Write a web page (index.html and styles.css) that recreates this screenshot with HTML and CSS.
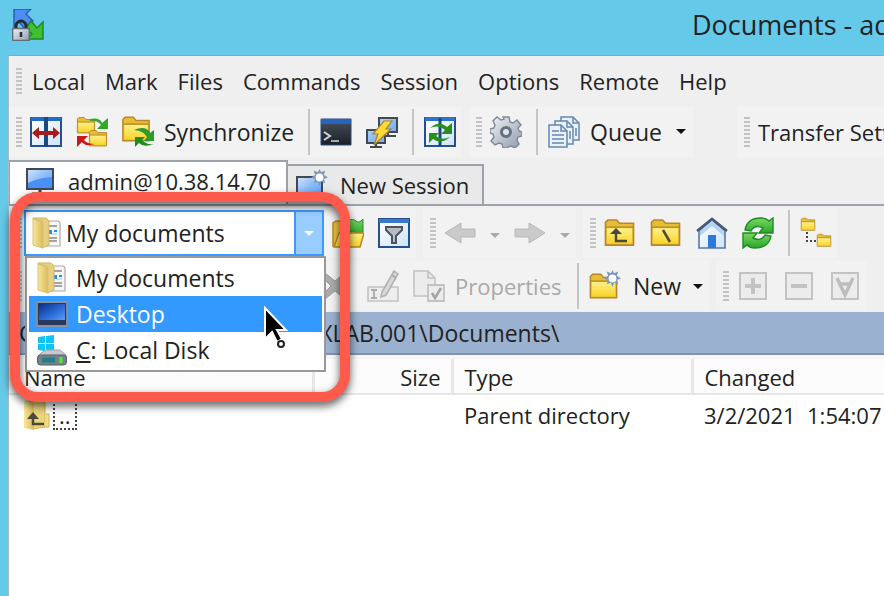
FILE: index.html
```html
<!DOCTYPE html>
<html lang="en">
<head>
<meta charset="utf-8">
<title>Documents - admin@10.38.14.70</title>
<link rel="stylesheet" href="styles.css">
</head>
<body>
<svg class="sprite" aria-hidden="true">
  <defs>
    <linearGradient id="gold" x1="0" y1="0" x2="0" y2="1"><stop offset="0" stop-color="#fff08a"/><stop offset="1" stop-color="#f8d428"/></linearGradient>
    <linearGradient id="screen" x1="0" y1="0" x2="1" y2="1"><stop offset="0" stop-color="#d2e3fb"/><stop offset=".5" stop-color="#8dbdf8"/><stop offset="1" stop-color="#5b9cf4"/></linearGradient>
    <linearGradient id="night" x1="0" y1="0" x2="1" y2="1"><stop offset="0" stop-color="#0a2f86"/><stop offset=".6" stop-color="#2f6fdc"/><stop offset="1" stop-color="#5c9cf5"/></linearGradient>
    <linearGradient id="pane" x1="0" y1="0" x2="1" y2="1"><stop offset="0" stop-color="#fff"/><stop offset="1" stop-color="#cfe3f8"/></linearGradient>
    <linearGradient id="dark" x1="0" y1="0" x2="0" y2="1"><stop offset="0" stop-color="#4a525e"/><stop offset="1" stop-color="#1b1f26"/></linearGradient>
    <linearGradient id="steel" x1="0" y1="0" x2="1" y2="1"><stop offset="0" stop-color="#f0f2f6"/><stop offset="1" stop-color="#8f9bab"/></linearGradient>
    <linearGradient id="leaf" x1="0" y1="0" x2="0" y2="1"><stop offset="0" stop-color="#7bda5e"/><stop offset="1" stop-color="#27a52c"/></linearGradient>
    <linearGradient id="tan" x1="0" y1="0" x2="1" y2="0"><stop offset="0" stop-color="#f7e6a0"/><stop offset="1" stop-color="#d9bc58"/></linearGradient>
    <symbol id="folder" viewBox="0 0 32 32"><path d="M1.500 28.500V5L4 2.500h9L16 6h14.500v22.500z" fill="#e6bd35" stroke="#b8872a" stroke-width="1.600"/><path d="M3 11h26v16H3z" fill="url(#gold)"/><path d="M2 10h28" stroke="#b8872a" stroke-width="1.400"/></symbol>
    <symbol id="burst" viewBox="0 0 16 16"><path d="M8 0l1.500 3 4-1.500-1.500 4L16 8l-4 1.500 1.500 4-4-1.500L8 16l-1.500-4-4 1.500 1.500-4L0 8l4-2.500-1.500-4 4 1.500z" fill="#7896b8"/><circle cx="8" cy="8" r="3.700" fill="#fff"/></symbol>
    <symbol id="mydocs" viewBox="0 0 32 32"><path d="M14 4h13.500l1.500 2v23H14z" fill="#f6f6f4" stroke="#aaa" stroke-width="1.200"/><path d="M18 9h8M18 21h8M18 24h8" stroke="#888" stroke-width="1.300"/><path d="M20 17h6" stroke="#b5d4f0" stroke-width="1.300"/><path d="M17 13h4v4h-4zM23 13h3v2h-3z" fill="#278ce8"/><path d="M2 1h13l3 3v24l-7 3V4L2 2z" fill="#e6cf82" stroke="#d0b65f"/><path d="M2 2l10 3v26L2 28z" fill="url(#tan)" stroke="#d9c270"/></symbol>
  </defs>
</svg>

<header class="titlebar">
  <svg class="app-icon" viewBox="0 0 32 32" aria-hidden="true"><path d="M2 0h17l-5 5 7 7-8 8-6-7-5 5z" fill="#4c8df0" stroke="#2a5cab" stroke-width="1.400"/><path d="M19 12l6 7 6-6v17H15l5-5-6-6z" fill="#3fc034" stroke="#1f861f" stroke-width="1.400"/><path d="M4 20v-3a5 5 0 0 1 10 0v3" fill="none" stroke="#252a31" stroke-width="3"/><path d="M.700 19.500h16.600v12H.700z" fill="url(#steel)" stroke="#626c7b" stroke-width="1.400"/><path d="M9 23v5" stroke="#292f39" stroke-width="2.500"/></svg>
  <h1>Documents - admin@10.38.14.70 - WinSCP</h1>
</header>

<div class="window">
  <nav class="menubar" aria-label="Main menu">
    <span class="grip"></span>
    <button>Local</button><button>Mark</button><button>Files</button><button>Commands</button><button>Session</button><button>Options</button><button>Remote</button><button>Help</button>
  </nav>

  <div class="toolbar-row main-row">
    <div class="band">
      <span class="grip"></span>
      <button class="tool" aria-label="Compare directories"><svg viewBox="0 0 32 32"><path d="M1 2h30v28H1z" fill="url(#pane)" stroke="#24508f" stroke-width="2"/><path d="M1 3h30" stroke="#236ac9" stroke-width="4"/><path d="M16 1v30" stroke="#174a86" stroke-width="4"/><path d="M2 17l7-6v4h14v-4l7 6-7 6v-4H9v4z" fill="#a91a18"/></svg></button>
      <button class="tool" aria-label="Synchronize both"><svg viewBox="0 0 32 32"><use href="#folder" width="20" height="19"/><use href="#folder" x="12" y="13" width="20" height="19"/><path d="M14 3q10-2 12 4l6-5v11H21l4-4q-4-5-11-4z" fill="#2faa26"/><path d="M19 28Q9 31 6 26l-5 5V20h11l-4 4q3 4 11 4z" fill="#ca1919"/></svg></button>
      <button class="tool sync"><svg viewBox="0 0 32 32"><use href="#folder" x="-1" y="-1" width="30" height="29"/><path d="M12 14q12-5 16 3l4-3v11H22l3-4q-3-6-13-7z" fill="#2f9a2a"/><path d="M32 28q-10 4-15-1l-4 4V21h10l-3 3q4 5 12 4z" fill="#238b1d"/></svg>Synchronize</button>
      <span class="sep"></span>
      <button class="tool" aria-label="Open terminal"><svg viewBox="0 0 32 32"><path d="M1 3h30v26H1z" fill="url(#dark)" stroke="#2b4878"/><path d="M1 3h30v5H1z" fill="#2465bf"/><path d="M4 16l6 4-6 4" fill="none" stroke="#ced4db" stroke-width="2"/><path d="M11 25h8" stroke="#ced4db" stroke-width="1.500"/></svg></button>
      <button class="tool" aria-label="Open in PuTTY"><svg viewBox="0 0 32 32"><path d="M13 2h18v14H13zM1 14h18v13H1z" fill="url(#screen)" stroke="#414954" stroke-width="2"/><path d="M22 17v3M18 20h12M10 28v3M4 31h12" stroke="#414954" stroke-width="2.200"/><path d="M18 5h8l-6 8h5L8 29l4-11H7z" fill="#ffd936" stroke="#a98422" stroke-width="1.200"/></svg></button>
      <span class="sep"></span>
      <button class="tool" aria-label="Keep up to date"><svg viewBox="0 0 32 32"><path d="M1 2h30v28H1z" fill="url(#pane)" stroke="#24508f" stroke-width="2"/><path d="M1 3h30" stroke="#2c74ca" stroke-width="4"/><path d="M16 2v28" stroke="#174a86" stroke-width="3"/><path d="M6 12q9-8 17-1l5-4v11H17l4-4q-7-6-15-2z" fill="#27901d"/><path d="M26 21q-9 8-17 2l-4 4V17h10l-3 3q6 5 14 1z" fill="#27901d"/></svg></button>
    </div>
    <div class="band">
      <span class="grip"></span>
      <button class="tool" aria-label="Preferences"><svg viewBox="0 0 32 32"><path d="M13 1h6l1 5 3 1 4-3 4 5-3 3 1 3 3 1v4l-4 1-1 3 2 4-4 4-4-2-3 1-1 1h-4l-1-4-3-1-4 2-4-4 3-4-1-3-3-1v-4l4-1 1-3-2-4 4-4 4 3 3-1z" fill="url(#steel)" stroke="#7e8996" stroke-width="1.400"/><circle cx="16" cy="16" r="4.500" fill="#dfe3e8" stroke="#66717f" stroke-width="3"/></svg></button>
      <span class="sep"></span>
      <button class="tool queue"><svg viewBox="0 0 32 32"><g fill="#e9f1f9" stroke="#6488b0" stroke-width="1.500"><path d="M13 1h12l6 6v17H13z"/><path d="M7 5h12l6 6v17H7z"/><path d="M1 9h12l6 6v16H1z"/><path d="M13 9v6h6M19 5v6h6M25 1v6h6M4 15h7M4 19h12M4 23h12M4 27h12M22 15v8M28 12v8" fill="none"/></g></svg>Queue<i class="caret"></i></button>
    </div>
    <div class="band transfer"><span class="grip"></span><span>Transfer Settings Default</span></div>
  </div>

  <div class="tabs" role="tablist">
    <button class="tab active" role="tab" aria-selected="true"><svg viewBox="0 0 32 32"><path d="M3 4h26v20H3z" fill="url(#screen)" stroke="#414954" stroke-width="2"/><path d="M4 18q10-5 24-6v11H4z" fill="#4b91f5"/><path d="M16 25v4M8 29h16" stroke="#414954" stroke-width="3"/></svg>admin@10.38.14.70</button>
    <button class="tab" role="tab" aria-selected="false"><svg viewBox="0 0 32 32"><path d="M1 8h25v19H1z" fill="url(#screen)" stroke="#414954" stroke-width="2"/><path d="M6 30h15" stroke="#414954" stroke-width="3"/><use href="#burst" x="15" y="0" width="17" height="17"/></svg>New Session</button>
  </div>

  <main class="panel">
    <div class="toolbar-row local-row">
      <div class="band">
        <span class="grip"></span>
        <div class="combo">
          <svg viewBox="0 0 32 32" aria-hidden="true"><use href="#mydocs"/></svg>
          <select aria-label="Location"><option>My documents</option><option>Desktop</option><option>C: Local Disk</option></select>
          <span class="combo-arrow"><i class="caret"></i></span>
        </div>
        <button class="tool" aria-label="Open directory"><svg viewBox="0 0 32 32"><path d="M1 29V6l3-2h8l3 3h13v22z" fill="#e9c03c" stroke="#b8872a" stroke-width="1.500"/><path d="M15 18V4q6-3 9 0t7-2v13q-4 3-8 0t-8 3z" fill="url(#leaf)" stroke="#27892a"/><path d="M2 30l5-14h25l-4 14z" fill="url(#gold)" stroke="#b8872a" stroke-width="1.500"/></svg></button>
        <button class="tool" aria-label="Filter"><svg viewBox="0 0 32 32"><path d="M1 2h30v28H1z" fill="url(#pane)" stroke="#24508f" stroke-width="2"/><path d="M1 4h30" stroke="#3878cf" stroke-width="4"/><path d="M8 10h16v3l-6 6v7h-4v-7l-6-6z" fill="#b9bdc2" stroke="#4d545d" stroke-width="2"/></svg></button>
      </div>
      <div class="band">
        <span class="grip"></span>
        <button class="tool" aria-label="Back" disabled><svg viewBox="0 0 32 32"><path d="M1 16L17 6v6h14v8H17v6z" fill="#cacaca" stroke="#b8b8b8"/></svg></button>
        <button class="drop" aria-label="Back history" disabled><i class="caret"></i></button>
        <button class="tool" aria-label="Forward" disabled><svg viewBox="0 0 32 32"><path d="M31 16L15 6v6H1v8h14v6z" fill="#cacaca" stroke="#b8b8b8"/></svg></button>
        <button class="drop" aria-label="Forward history" disabled><i class="caret"></i></button>
      </div>
      <div class="band">
        <span class="grip"></span>
        <button class="tool" aria-label="Parent directory"><svg viewBox="0 0 32 32"><use href="#folder" width="31" height="32"/><path d="M12 15v9h11" fill="none" stroke="#4b4a39" stroke-width="2.500"/><path d="M6 17l6-6 6 6z" fill="#4b4a39"/></svg></button>
        <button class="tool" aria-label="Root directory"><svg viewBox="0 0 32 32"><use href="#folder" width="31" height="32"/><path d="M13 13l7 12" stroke="#4b4a39" stroke-width="2.500"/></svg></button>
        <button class="tool" aria-label="Home directory"><svg viewBox="0 0 32 32"><path d="M3 14L16 3l13 11v17H3z" fill="url(#pane)" stroke="#5579a1" stroke-width="1.600"/><path d="M4 14L16 4l12 10v5L16 9 4 19z" fill="#b5d3f4"/><path d="M12 18h8v13h-8z" fill="#2d78dc"/><path d="M1 14L16 2l15 12" fill="none" stroke="#465a74" stroke-width="2.600"/></svg></button>
        <button class="tool" aria-label="Refresh"><svg viewBox="0 0 32 32"><path d="M3 13Q5 1 19 1q5 0 8 3l4-3v15H17l4-5q-8-4-12 3z" fill="url(#leaf)" stroke="#21882a" stroke-width="1.400"/><path d="M29 19q-2 12-16 12-5 0-8-3l-4 3V16h14l-4 5q8 4 12-3z" fill="url(#leaf)" stroke="#21882a" stroke-width="1.400"/></svg></button>
        <span class="sep"></span>
        <button class="tool" aria-label="Directory tree"><svg viewBox="0 0 32 32"><use href="#folder" width="16" height="15"/><use href="#folder" x="16" y="16" width="16" height="15"/><path d="M7 15v9h9" fill="none" stroke="#444" stroke-width="2" stroke-dasharray="2 2"/></svg></button>
      </div>
    </div>

    <div class="toolbar-row file-row">
      <div class="band file-band">
        <span class="grip"></span>
        <span class="spring"></span>
        <button class="tool" aria-label="Delete" disabled><svg viewBox="0 0 32 32"><path d="M4 3l10 8L24 3l4 5-8 8 8 8-4 5-10-8-10 8V22l6-6-6-6z" fill="#aaa" stroke="#999"/></svg></button>
        <button class="tool" aria-label="Rename" disabled><svg viewBox="0 0 32 32"><path d="M1 17h30v14H1z" fill="#ededed" stroke="#c2c2c2" stroke-width="1.600"/><path d="M4 20h6M7 20v8M4 28h6" stroke="#aaa" stroke-width="1.800"/><path d="M15 22L27 1l4 3-12 21-5 2z" fill="#d9d9d9" stroke="#b2b2b2" stroke-width="1.600"/><path d="M25 5l4 3" stroke="#aaa" stroke-width="2"/></svg></button>
        <button class="tool properties" disabled><svg viewBox="0 0 32 32"><path d="M1 1h14l7 7v18H1z" fill="#ececec" stroke="#c2c2c2" stroke-width="1.600"/><path d="M15 1v7h7" fill="none" stroke="#c2c2c2" stroke-width="1.600"/><path d="M15 15h16v16H15z" fill="#ececec" stroke="#c2c2c2" stroke-width="1.800"/><path d="M19 23l3 5 6-10" fill="none" stroke="#a5a5a5" stroke-width="2.600"/></svg>Properties</button>
        <span class="sep"></span>
        <button class="tool new"><svg viewBox="0 0 32 32"><use href="#folder" y="2" width="29" height="29"/><use href="#burst" x="15" y="0" width="17" height="17"/></svg>New<i class="caret"></i></button>
      </div>
      <div class="band">
        <span class="grip"></span>
        <button class="tool" aria-label="Select files" disabled><svg viewBox="0 0 32 32"><path d="M3 3h26v26H3z" fill="#ececec" stroke="#c3c3c3" stroke-width="2"/><path d="M16 8v16M8 16h16" stroke="#c3c3c3" stroke-width="4"/></svg></button>
        <button class="tool" aria-label="Unselect files" disabled><svg viewBox="0 0 32 32"><path d="M3 3h26v26H3z" fill="#ececec" stroke="#c3c3c3" stroke-width="2"/><path d="M8 16h16" stroke="#c3c3c3" stroke-width="4"/></svg></button>
        <button class="tool" aria-label="Select all" disabled><svg viewBox="0 0 32 32"><path d="M3 3h26v26H3z" fill="#ececec" stroke="#c3c3c3" stroke-width="2"/><path d="M8 8l8 17 8-17M11 14h10" fill="none" stroke="#bdbdbd" stroke-width="3.500"/></svg></button>
      </div>
    </div>

    <div class="path">C:\Users\Administrator.NTNXLAB.001\Documents\</div>

    <table class="files">
      <colgroup><col class="c-name"><col class="c-size"><col class="c-type"><col></colgroup>
      <thead><tr><th>Name</th><th class="num">Size</th><th>Type</th><th>Changed</th></tr></thead>
      <tbody><tr>
        <td><div class="entry"><svg viewBox="0 0 32 32" aria-hidden="true"><path d="M4 2h18l2 2v24l-12 2z" fill="#ecd57d" stroke="#cdb152"/><path d="M25 15h3v13h-4" fill="#f2db83" stroke="#cdb152"/><path d="M3 2l10 2v27L3 29z" fill="url(#tan)"/><path d="M12 17v8h11" fill="none" stroke="#4b4a39" stroke-width="2.500"/><path d="M6 20l6-7 6 7z" fill="#4b4a39"/></svg><span class="focus">..</span></div></td>
        <td></td><td>Parent directory</td><td class="date">3/2/2021  1:54:07 PM</td>
      </tr></tbody>
    </table>

    <ul class="listbox" role="listbox" aria-label="Locations">
      <li role="option"><svg viewBox="0 0 32 32" aria-hidden="true"><use href="#mydocs"/></svg>My documents</li>
      <li role="option" class="selected" aria-selected="true"><svg viewBox="0 0 32 32" aria-hidden="true"><path d="M1 4h30v24H1z" fill="#28385f" stroke="#8b9099" stroke-width="1.800"/><path d="M3 6h26v16H3z" fill="url(#night)"/></svg>Desktop</li>
      <li role="option"><svg viewBox="0 0 32 32" aria-hidden="true"><path d="M2 3l7-1v7H2zM10 2l8-1v8h-8zM2 10h7v7l-7-1zM10 10h8v8l-8-1z" fill="#10c4f7"/><path d="M5 19l5-3h14l6 5v6H2v-5z" fill="#c6cace" stroke="#9da3a8"/><rect x="1.500" y="21" width="29" height="10" rx="3" fill="#74838b" stroke="#596068"/><path d="M6 26h13" stroke="#247e87" stroke-width="5"/><path d="M25 23v6" stroke="#50f02c" stroke-width="3"/></svg><span><u>C</u>: Local Disk</span></li>
    </ul>
    <div class="callout"></div>
    <svg class="pointer" viewBox="0 0 26 44" aria-hidden="true"><path d="M2 2v31l7-7 5 10 5-3-5-9h9z" fill="#000" stroke="#fff" stroke-width="2"/><circle cx="18" cy="38" r="3" fill="#fff" stroke="#222" stroke-width="2"/></svg>
  </main>
</div>
</body>
</html>
```

FILE: styles.css
```css
* { box-sizing: border-box; }

body {
  margin: 0;
  min-height: 100vh;
  display: flex;
  flex-direction: column;
  overflow: hidden;
  background: #65c9e9;
  color: #222;
  font-family: "Open Sans", "Noto Sans", sans-serif;
  font-size: 23px;
  line-height: 32px;
  white-space: nowrap;
}

button, select { font: inherit; color: inherit; }
button { background: none; border: 0; padding: 0; text-align: left; }
svg { display: block; flex: none; width: 32px; height: 32px; }
.sprite { position: absolute; width: 0; height: 0; }

.titlebar {
  display: flex;
  align-items: center;
  justify-content: space-between;
  height: 55px;
  padding: 0 0 6px 12px;
}
.titlebar h1 {
  width: 192px;
  margin: 0;
  overflow: hidden;
  font-size: 27px;
  font-weight: 400;
  line-height: 40px;
}

.window {
  flex: 1;
  display: flex;
  flex-direction: column;
  margin-left: 8px;
  border-top: 1px solid #78aecb;
  border-left: 1px solid #a3bcc9;
  background: #efefef;
}

.grip {
  flex: none;
  width: 6px;
  height: 30px;
  background: repeating-linear-gradient(#c2c2c2 0 2px, transparent 2px 4px);
}

.menubar {
  display: flex;
  align-items: center;
  gap: 20px;
  height: 50px;
  padding-left: 7px;
  font-size: 22px;
}
.menubar .grip { height: 26px; margin-right: -10px; }

.toolbar-row { display: flex; align-items: center; }
.main-row { height: 51px; }
.local-row { height: 54px; }
.file-row { height: 52px; }

.band {
  display: flex;
  align-items: center;
  height: 50px;
  margin-right: 7px;
  padding-left: 7px;
  background: #f2f2f2;
}
.tool {
  display: flex;
  align-items: center;
  gap: 10px;
  flex: none;
  width: 46px;
  height: 46px;
  padding-left: 8px;
}
.tool.sync { width: 186px; }
.tool.queue { width: 154px; }
.tool.properties { width: 164px; font-size: 22px; }
.tool.new { gap: 12px; width: 128px; }
.tool:disabled { color: #a9a9a9; }
.drop { width: 24px; padding-left: 8px; }
.sep { flex: none; width: 12px; height: 46px; padding-left: 8px; }
.sep::before { content: ""; display: block; width: 2px; height: 46px; background: #c5c5c5; }

.caret {
  display: inline-block;
  border: 5px solid transparent;
  border-top-color: #111;
  border-bottom: 0;
  vertical-align: middle;
}
.queue .caret,
.new .caret { margin-left: auto; margin-right: 8px; }
:disabled .caret { border-top-color: #aaa; }
.transfer { flex: 1; gap: 8px; margin: 0 0 0 36px; overflow: hidden; font-size: 22px; }

.tabs {
  display: flex;
  align-items: flex-end;
  height: 49px;
  border-bottom: 2px solid #9da1a8;
  font-size: 22px;
}
.tab {
  display: flex;
  align-items: center;
  gap: 12px;
  width: 196px;
  height: 40px;
  padding-left: 8px;
  border: 2px solid #9da1a8;
  border-width: 2px 2px 0 0;
  background: #e9e9e9;
}
.tab.active {
  width: 279px;
  height: 44px;
  padding: 0 0 4px 14px;
  border-left-width: 1px;
  background: #fff;
}

.panel {
  flex: 1;
  display: flex;
  flex-direction: column;
  position: relative;
  background: linear-gradient(#efefef 0 150px, #fff 150px);
}

.combo {
  display: flex;
  align-items: center;
  position: relative;
  width: 300px;
  height: 46px;
  margin-left: 2px;
  padding-left: 5px;
  border: 2px solid #3c99ff;
  background: #fff;
}
.combo select {
  flex: 1;
  min-width: 0;
  padding: 0 3px;
  appearance: none;
  border: 0;
  background: none;
}
.combo-arrow {
  width: 28px;
  height: 42px;
  border-left: 2px solid #3c99ff;
  background: #99ccff;
  line-height: 38px;
  text-align: center;
}
.combo-arrow .caret { border-top-color: #fff; }

.file-band { width: 700px; }
.spring { flex: 1; }

.path {
  height: 43px;
  padding: 5px 10px;
  border-bottom: 2px solid #8492a7;
  background: #9ab1cf;
}

.files {
  width: 100%;
  border-collapse: collapse;
  table-layout: fixed;
  border-top: 4px solid #f5f5f5;
  font-size: 22px;
}
.c-name { width: 304px; }
.c-size { width: 139px; }
.c-type { width: 240px; }
.files th {
  height: 36px;
  padding: 2px 10px 0 11px;
  border-right: 3px solid #e6e6e6;
  border-bottom: 2px solid #e6e6e6;
  background: #fcfcfc;
  font-weight: 400;
  text-align: left;
}
.files th:first-child { padding-left: 15px; }
.files th:last-child { border-right: 0; }
.files th.num { text-align: right; }
.files td { height: 40px; padding: 0 0 0 12px; overflow: hidden; }
.files .date { white-space: pre; }
.entry { display: flex; align-items: center; }
.focus { padding: 0 4px; border: 2px dotted #444; line-height: 26px; }

.listbox {
  position: absolute;
  top: 50px;
  left: 16px;
  width: 301px;
  margin: 0;
  padding: 2px;
  border: 2px solid #999;
  background: #fff;
  list-style: none;
}
.listbox li { display: flex; align-items: center; gap: 8px; height: 36px; padding-left: 7px; }
.listbox .selected { background: #3399ff; color: #fff; }

.callout {
  position: absolute;
  top: -14px;
  left: 1px;
  width: 340px;
  height: 210px;
  border: 10px solid #ff5a4b;
  border-radius: 28px;
  filter: drop-shadow(0 4px 4px rgba(0, 0, 0, .65));
}
.pointer { position: absolute; top: 100px; left: 254px; width: 26px; height: 44px; }
```
